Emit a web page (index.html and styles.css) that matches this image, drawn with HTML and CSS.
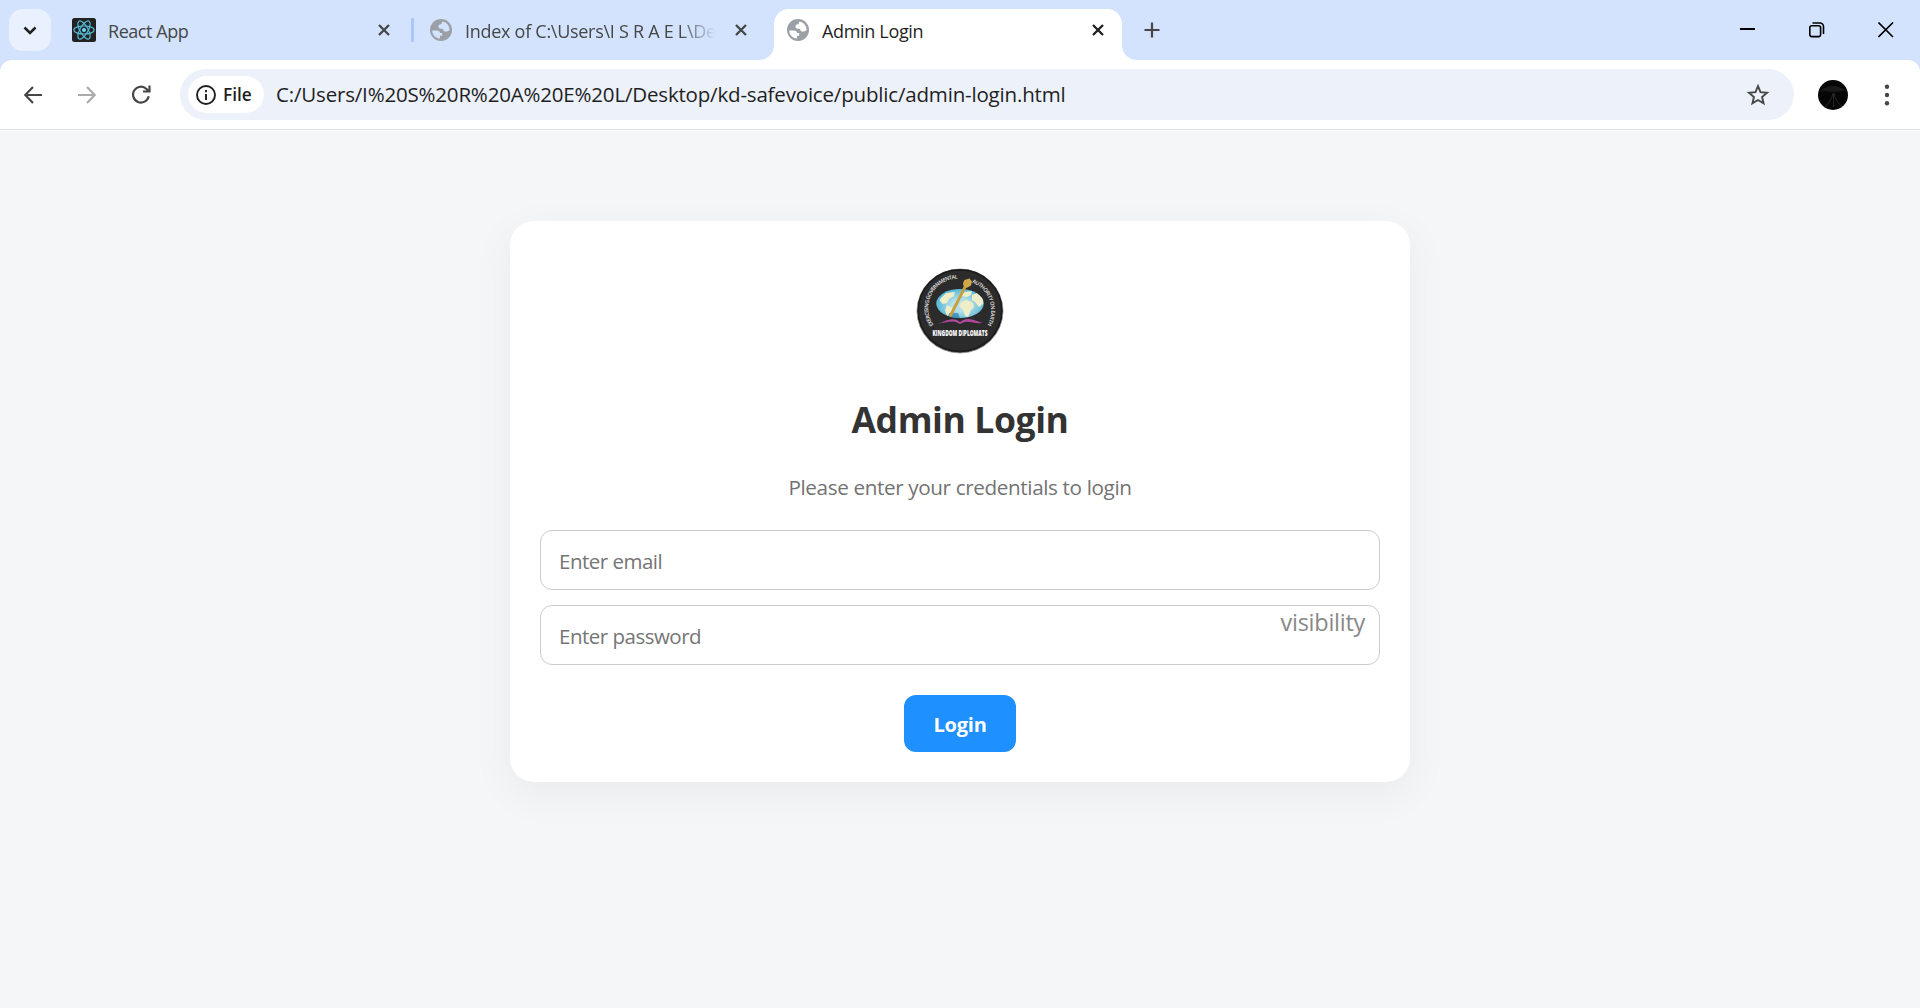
FILE: index.html
```html
<!DOCTYPE html>
<html lang="en">
<head>
<meta charset="utf-8">
<title>Admin Login</title>
<link rel="stylesheet" href="styles.css">
</head>
<body>
<svg width="0" height="0" class="defs" aria-hidden="true">
  <symbol id="globe" viewBox="0 0 22 22"><circle cx="11" cy="11" r="11" fill="#9aa0a6"/><path class="land" d="M2.200 11.500h4.600c2.200 0 3.200 1 3.200 2.600h2.200v2.600H10v2.700C5.500 19.200 2.200 15.600 2.200 11.500zM12.600 2.500c4.100.8 7 4.300 7 8.400-1.300 1.300-2.200 1.700-3.600 1.700-2 0-2.900-1-2.900-2.600-2.900 0-4.700-.3-4.700-2.400 0-1.700 1.200-2.300 3.200-2.300 0-1.300.3-2 1-2.800z"/></symbol>
  <symbol id="cross" viewBox="0 0 12 12"><path d="M1 1l10 10M11 1L1 11" fill="none" stroke="currentColor" stroke-width="2.300"/></symbol>
</svg>
<header class="browser">
  <div class="tabstrip">
    <button class="tab-search" aria-label="Search tabs"><svg width="14" height="9" viewBox="0 0 14 9"><path d="M1.500 1.500L7 7l5.500-5.500" fill="none" stroke="#1f1f1f" stroke-width="2.500"/></svg></button>
    <div class="tab tab-first">
      <svg class="favicon-react" width="24" height="24" viewBox="0 0 24 24"><rect width="24" height="24" rx="2.500" fill="#222"/><g fill="none" stroke="#55bcd8" stroke-width="1.200"><ellipse cx="12" cy="12" rx="10.200" ry="4"/><ellipse cx="12" cy="12" rx="10.200" ry="4" transform="rotate(60 12 12)"/><ellipse cx="12" cy="12" rx="10.200" ry="4" transform="rotate(120 12 12)"/></g><circle cx="12" cy="12" r="2" fill="#61dafb"/></svg>
      <span class="tab-title t-react">React App</span>
      <svg class="close" width="12" height="12"><use href="#cross"/></svg>
    </div>
    <div class="tab tab-second">
      <svg class="favicon" width="22" height="22"><use href="#globe"/></svg>
      <span class="tab-title t-index">Index of C:\Users\I S R A E L\De</span>
      <svg class="close" width="12" height="12"><use href="#cross"/></svg>
    </div>
    <div class="tab tab-active">
      <svg class="favicon" width="22" height="22"><use href="#globe"/></svg>
      <span class="tab-title t-admin">Admin Login</span>
      <svg class="close" width="12" height="12"><use href="#cross"/></svg>
    </div>
    <svg class="new-tab" width="16" height="16" viewBox="0 0 16 16"><path d="M8 .5v15M.5 8h15" stroke="#444746" stroke-width="2.200"/></svg>
    <div class="window-controls">
      <svg width="16" height="16" viewBox="0 0 16 16"><path d="M0 7h15" stroke="#000" stroke-width="2"/></svg>
      <svg width="16" height="16" viewBox="0 0 16 16"><g fill="none" stroke="#000" stroke-width="1.600"><rect x=".8" y="3.800" width="10.800" height="10.800" rx="2"/><path d="M3.500 1h7.500a3.500 3.500 0 0 1 3.500 3.500V12"/></g></svg>
      <svg width="16" height="16" viewBox="0 0 16 16"><path d="M.5.5l14.500 14.500M15 .5L.5 15" stroke="#000" stroke-width="1.600"/></svg>
    </div>
  </div>
  <div class="toolbar">
    <svg class="back" width="18" height="18" viewBox="0 0 18 18"><path d="M18 9H1.500M9 1L1.300 9 9 17" fill="none" stroke="#444746" stroke-width="2.100"/></svg>
    <svg class="forward" width="18" height="18" viewBox="0 0 18 18"><path d="M0 9h16.500M9 1l7.700 8L9 17" fill="none" stroke="#a9abab" stroke-width="2.100"/></svg>
    <svg class="reload" width="19" height="19" viewBox="0 0 19 19"><path d="M16.700 11.200a7.900 7.900 0 1 1-2.200-7.200L17 6.500M17.500 .500V6.500H11" fill="none" stroke="#444746" stroke-width="2.200"/></svg>
    <div class="omnibox">
      <div class="chip">
        <svg width="20" height="20" viewBox="0 0 20 20"><circle cx="10" cy="10" r="9" fill="none" stroke="#1f1f1f" stroke-width="1.900"/><path d="M10 9v6M10 5v2.200" stroke="#1f1f1f" stroke-width="1.900"/></svg>
        <span class="chip-label">File</span>
      </div>
      <span class="url">C:/Users/I%20S%20R%20A%20E%20L/Desktop/kd-safevoice/public/admin-login.html</span>
      <svg class="star" width="24" height="24" viewBox="0 0 24 24"><path d="M12 3.200l2.500 6 6.500.55-4.950 4.250 1.500 6.350L12 17l-5.550 3.350 1.500-6.350L3 9.750l6.500-.55z" fill="none" stroke="#444746" stroke-width="1.900"/></svg>
    </div>
    <svg class="avatar" width="30" height="30" viewBox="0 0 30 30"><circle cx="15" cy="15" r="15" fill="#060606"/><path d="M2 10c5-2 8-4 13-4s8 2 13 4c-5 1-8 2-12 2S7 11 2 10z" fill="#191919"/><path d="M15 13c-1 6-4 10-8 14M16 13c1 6 4 10 8 14M15.500 14v13" stroke="#303030" fill="none" stroke-width=".8"/></svg>
    <svg class="menu" width="6" height="22" viewBox="0 0 6 22" fill="#444746"><circle cx="3" cy="2.700" r="2.200"/><circle cx="3" cy="11" r="2.200"/><circle cx="3" cy="19.300" r="2.200"/></svg>
  </div>
</header>
<main class="page">
  <section class="card">
    <svg class="logo" width="90" height="90" viewBox="0 0 90 90" role="img">
      <defs>
        <path id="arc-left" d="M18.500 59A29.500 29.500 0 0 1 53 14.500"/>
        <path id="arc-right" d="M57 16.500A30 30 0 0 1 66 67"/>
        <clipPath id="earth"><ellipse cx="45" cy="37.500" rx="23.800" ry="14.500"/></clipPath>
        <radialGradient id="sea"><stop offset=".35" stop-color="#b5e0ea"/><stop offset="1" stop-color="#4fb3d4"/></radialGradient>
      </defs>
      <ellipse cx="45" cy="45" rx="43" ry="42" fill="#2b2b2b" stroke="#8d8d8d" stroke-width=".8"/>
      <ellipse cx="45" cy="44.500" rx="41.800" ry="40.800" fill="none" stroke="#1a1a1a" stroke-width="1.400"/>
      <g clip-path="url(#earth)"><rect x="20" y="22" width="52" height="34" fill="url(#sea)"/>
        <path d="M25 33l6-6 9-1-1 4-5 3-2 4-4 1-3-3zM32 39l6 3-2 4-4 4-2-6zM46 30l4-4 7-1-1 4-4 2zM46 36l6-2 6 3 1 4-3 3-3 7-3-1-2-6-4-4zM57 29l5-2 6 5 0 6-4 3-4-5-3-2z" fill="#f0eec9"/><path d="M34 47h9l3 8H34z" fill="#287fb3" opacity=".7"/></g>
      <path d="M35 50.500L50.500 20" stroke="#c99f3c" stroke-width="2.800"/>
      <path d="M48 17l1.500-3 5-1.500 2.500 3-1 4-4.500 2.500-3-2z" fill="#d2a74a"/>
      <path d="M21 58c7-1 13-7 21-4l3 2 3-2c8-3 14 2 20 3-8 1-15-3-20-.5l-3 1.500-3-1.500c-5-2.500-13 1-21 1.500z" fill="#b1489d"/>
      <g class="ring-text"><text><textPath href="#arc-left" textLength="64">EXERCISING GOVERNMENTAL</textPath></text><text><textPath href="#arc-right" textLength="51">AUTHORITY ON EARTH</textPath></text></g>
      <text class="logo-name" x="17.500" y="69.500" textLength="55" lengthAdjust="spacingAndGlyphs">KINGDOM DIPLOMATS</text>
    </svg>
    <h1 class="title">Admin Login</h1>
    <p class="subtitle">Please enter your credentials to login</p>
    <form class="form">
      <input class="field f-email" type="email" placeholder="Enter email">
      <div class="password"><input class="field f-pass" type="password" placeholder="Enter password"><span class="toggle">visibility</span></div>
      <button class="login" type="button">Login</button>
    </form>
  </section>
</main>
</body>
</html>
```
FILE: styles.css
```css
* { box-sizing: border-box; }
body {
  margin: 0;
  width: 1920px;
  height: 1008px;
  overflow: hidden;
  background: #f4f6f8;
  font-family: "Open Sans", "Noto Sans", sans-serif;
}
.defs { position: absolute; }
svg { display: block; flex: none; }
button { border: 0; padding: 0; font: inherit; }

.browser { background: linear-gradient(#d3e2fd 100px, #fff 100px); height: 131px; }
.tabstrip { display: flex; height: 60px; padding: 9px 26px 0 9px; }
.tab-search {
  width: 42px; height: 42px; border-radius: 14px; background: #eaf1fe;
  display: flex; align-items: center; justify-content: center;
}
.tab { --tab-bg: #d3e2fd; display: flex; align-items: center; height: 42px; color: #444746; }
.tab-title { flex: 1; min-width: 0; overflow: hidden; white-space: nowrap; font-size: 18px; line-height: 26px; padding-top: 2px; }
.land { fill: var(--tab-bg); }
.tab-first { width: 360px; margin-left: 3px; padding: 0 24px 0 18px; }
.t-react { margin-left: 12px; letter-spacing: -.45px; }
.tab-second { width: 360px; padding: 0 27px 0 16px; }
.tab-second::before { content: ""; width: 3px; height: 24px; background: #a8c7fa; border-radius: 1px; margin-left: -19px; }
.tab-second .favicon { margin-left: 16px; }
.t-index { margin: 0 17px 0 13px; letter-spacing: -.28px; -webkit-mask-image: linear-gradient(90deg, #000 85%, transparent 99%); mask-image: linear-gradient(90deg, #000 85%, transparent 99%); }
.tab-active {
  --tab-bg: #fff;
  position: relative; width: 348px; height: 51px; padding: 0 18px 9px 13px;
  background: #fff; border-radius: 15px 15px 0 0; color: #1f1f1f;
}
.tab-active::before, .tab-active::after { content: ""; position: absolute; bottom: 0; width: 15px; height: 15px; }
.tab-active::before { left: -15px; background: radial-gradient(circle at 0 0, transparent 14.500px, #fff 15.500px); }
.tab-active::after { right: -15px; background: radial-gradient(circle at 100% 0, transparent 14.500px, #fff 15.500px); }
.t-admin { margin-left: 13px; letter-spacing: -.33px; }
.new-tab { margin: 13px 0 0 22px; }
.window-controls { display: flex; gap: 53px; margin: 13px 0 0 auto; }

.toolbar {
  display: flex; align-items: center; height: 70px; padding: 0 30px 0 24px;
  background: #fff; border-radius: 12px 12px 0 0; border-bottom: 1px solid #dcdfe0;
}
.forward { margin-left: 36px; }
.reload { margin-left: 36px; }
.omnibox {
  display: flex; align-items: center; width: 1614px; height: 51px; margin-left: 29px;
  padding: 0 24px 0 8px; border-radius: 26px; background: #ecf1fa;
}
.chip { display: flex; align-items: center; width: 76px; height: 37px; padding-left: 8px; border-radius: 19px; background: #fff; }
.chip-label { margin-left: 7px; font-size: 17.300px; font-weight: 600; color: #1f1f1f; }
.url { margin-left: 12px; padding-bottom: 1px; font-size: 20.500px; letter-spacing: -.18px; line-height: 30px; color: #1f1f1f; white-space: nowrap; }
.star { margin-left: auto; }
.avatar { margin-left: 24px; }
.menu { margin-left: 36px; }

.page { display: flex; flex-direction: column; align-items: center; height: 877px; padding-top: 90px; }
.card {
  display: flex; flex-direction: column; align-items: center;
  width: 900px; height: 561px; padding: 45px 30px 30px;
  background: #fff; border-radius: 24px; box-shadow: 0 12px 45px rgba(0, 0, 0, .05);
}
.ring-text { fill: #e8e8e8; font-size: 5.300px; font-weight: 600; }
.logo-name { fill: #fff; font-size: 8px; font-weight: 800; }
.title { margin: 38px 0 0; font-size: 35.500px; letter-spacing: -.4px; line-height: 50px; font-weight: 700; color: #333; }
.subtitle { margin: 28px 0 0; font-size: 20.700px; letter-spacing: -.38px; line-height: 30px; color: #737373; white-space: nowrap; }
.form { display: flex; flex-direction: column; align-items: center; width: 100%; margin-top: 28px; gap: 15px; }
.field {
  display: block; width: 840px; height: 60px; padding: 2px 18px 0; outline: 0;
  border: 1px solid #ccc; border-radius: 12px; background: #fff; font: 20.500px "Open Sans", sans-serif; letter-spacing: -.5px;
}
.field::placeholder { color: #757575; }
.password { position: relative; }
.toggle { position: absolute; top: 0; right: 15px; font-size: 23.500px; letter-spacing: -.27px; line-height: 34px; color: #888; }
.login { width: 112px; height: 57px; margin-top: 15px; border-radius: 12px; background: #1e90ff; color: #fff; font-size: 20px; letter-spacing: -.2px; font-weight: 700; padding-top: 2px; }
```
